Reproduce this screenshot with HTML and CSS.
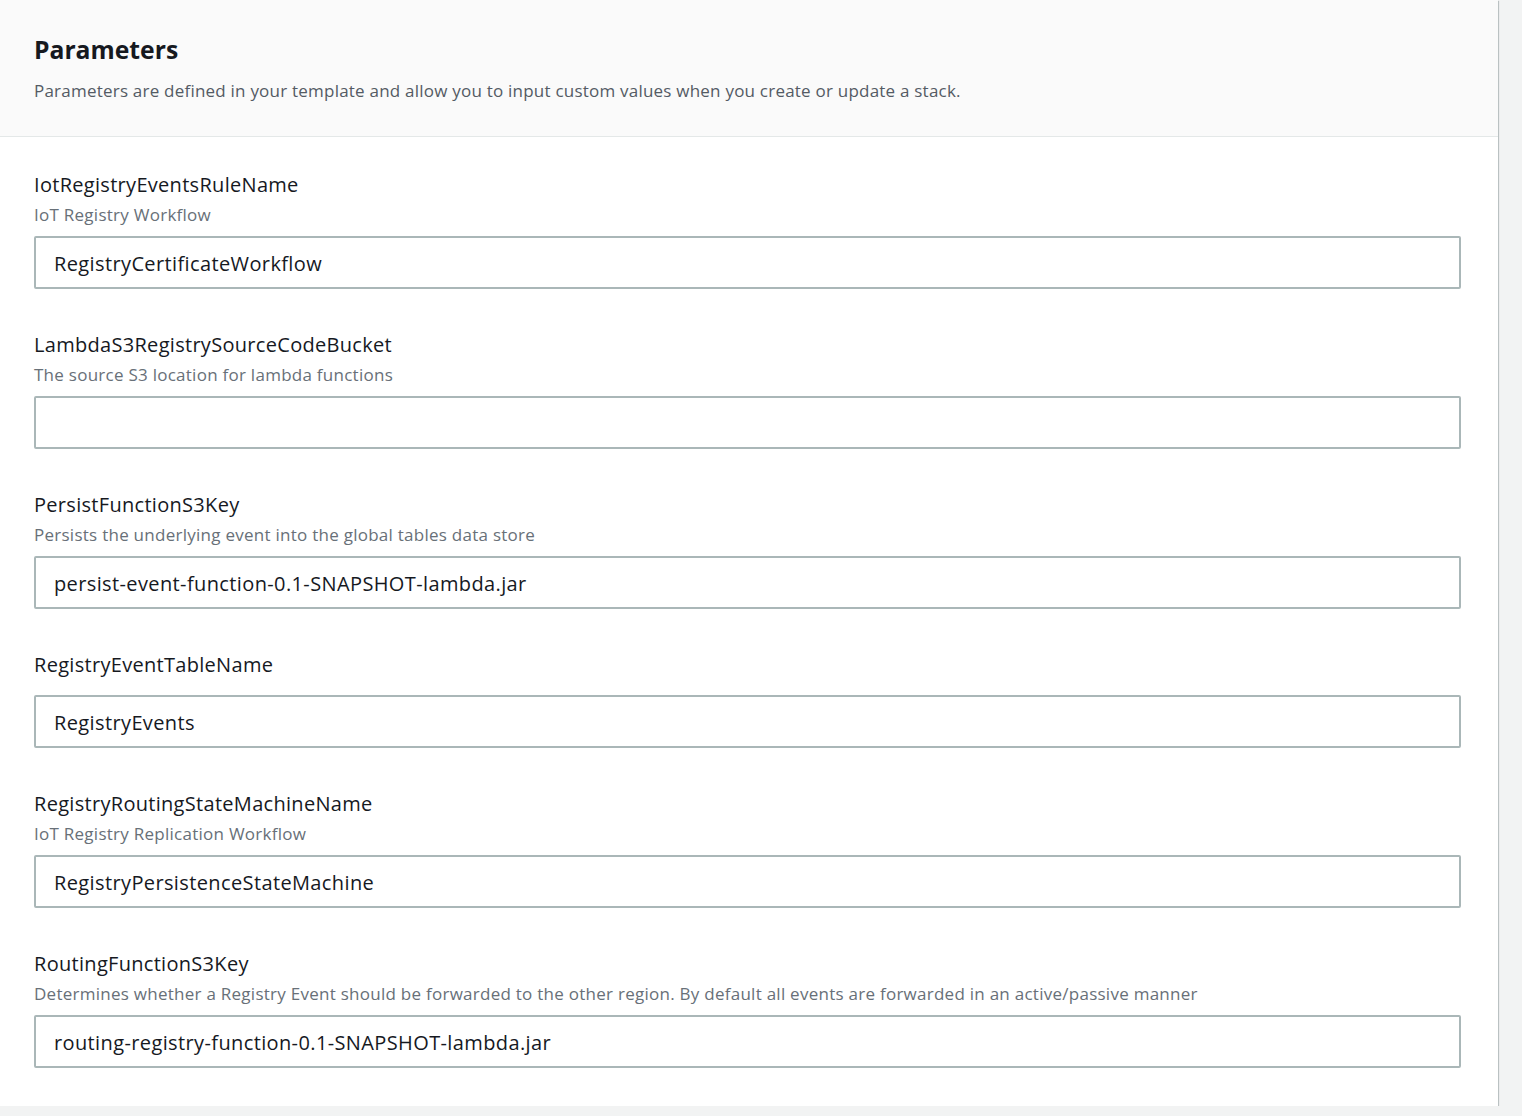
FILE: index.html
```html
<!DOCTYPE html>
<html lang="en">
<head>
<meta charset="utf-8">
<title>Parameters</title>
<link rel="stylesheet" href="styles.css">
</head>
<body>
<section class="card">
  <header class="card-header">
    <h2 class="card-title">Parameters</h2>
    <p class="card-desc">Parameters are defined in your template and allow you to input custom values when you create or update a stack.</p>
  </header>
  <div class="card-body">
    <div class="field">
      <label class="field-label">IotRegistryEventsRuleName</label>
      <div class="field-desc">IoT Registry Workflow</div>
      <input class="field-input" type="text" value="RegistryCertificateWorkflow">
    </div>
    <div class="field">
      <label class="field-label">LambdaS3RegistrySourceCodeBucket</label>
      <div class="field-desc">The source S3 location for lambda functions</div>
      <input class="field-input" type="text" value="">
    </div>
    <div class="field">
      <label class="field-label">PersistFunctionS3Key</label>
      <div class="field-desc">Persists the underlying event into the global tables data store</div>
      <input class="field-input" type="text" value="persist-event-function-0.1-SNAPSHOT-lambda.jar">
    </div>
    <div class="field">
      <label class="field-label">RegistryEventTableName</label>
      <input class="field-input" type="text" value="RegistryEvents">
    </div>
    <div class="field">
      <label class="field-label">RegistryRoutingStateMachineName</label>
      <div class="field-desc">IoT Registry Replication Workflow</div>
      <input class="field-input" type="text" value="RegistryPersistenceStateMachine">
    </div>
    <div class="field">
      <label class="field-label">RoutingFunctionS3Key</label>
      <div class="field-desc">Determines whether a Registry Event should be forwarded to the other region. By default all events are forwarded in an active/passive manner</div>
      <input class="field-input" type="text" value="routing-registry-function-0.1-SNAPSHOT-lambda.jar">
    </div>
  </div>
</section>
</body>
</html>
```
FILE: styles.css
```css
* { box-sizing: border-box; }
html, body {
  margin: 0;
  padding: 0;
  background: #f2f3f3;
  font-family: "Open Sans", "Noto Sans", Arial, sans-serif;
  color: #16191f;
}
.card {
  width: 1498px;
  background: #ffffff;
  box-shadow: 0 1px 1px 0 rgba(0, 28, 36, 0.35), 1px 1px 1px 0 rgba(0, 28, 36, 0.18);
}
.card-header {
  background: #fafafa;
  border-bottom: 1px solid #e4e8e8;
  padding: 35px 0 33px 34px;
}
.card-title {
  margin: 0;
  font-size: 24.7px;
  line-height: 30px;
  font-weight: 700;
  color: #16191f;
}
.card-desc {
  margin: 14px 0 0;
  font-size: 17px;
  line-height: 24px;
  letter-spacing: 0.22px;
  color: #545b64;
}
.card-body {
  display: flex;
  flex-direction: column;
  gap: 44px;
  padding: 36px 0 38px 34px;
}
.field {
  display: flex;
  flex-direction: column;
}
.field-label {
  font-size: 20px;
  line-height: 24px;
  letter-spacing: 0.3px;
  color: #16191f;
}
.field-desc {
  margin-top: 6px;
  font-size: 17px;
  line-height: 24px;
  letter-spacing: 0.26px;
  color: #687078;
}
.field-input {
  width: 1427px;
  height: 53px;
  margin: 0;
  padding: 2px 18px 0;
  border: 2px solid #aab7b8;
  border-radius: 2px;
  background: #ffffff;
  font-family: "Open Sans", "Noto Sans", Arial, sans-serif;
  font-size: 20px;
  letter-spacing: 0.38px;
  color: #16191f;
  outline: none;
}
.field-label + .field-input { margin-top: 18px; }
.field-desc + .field-input { margin-top: 9px; }
```
